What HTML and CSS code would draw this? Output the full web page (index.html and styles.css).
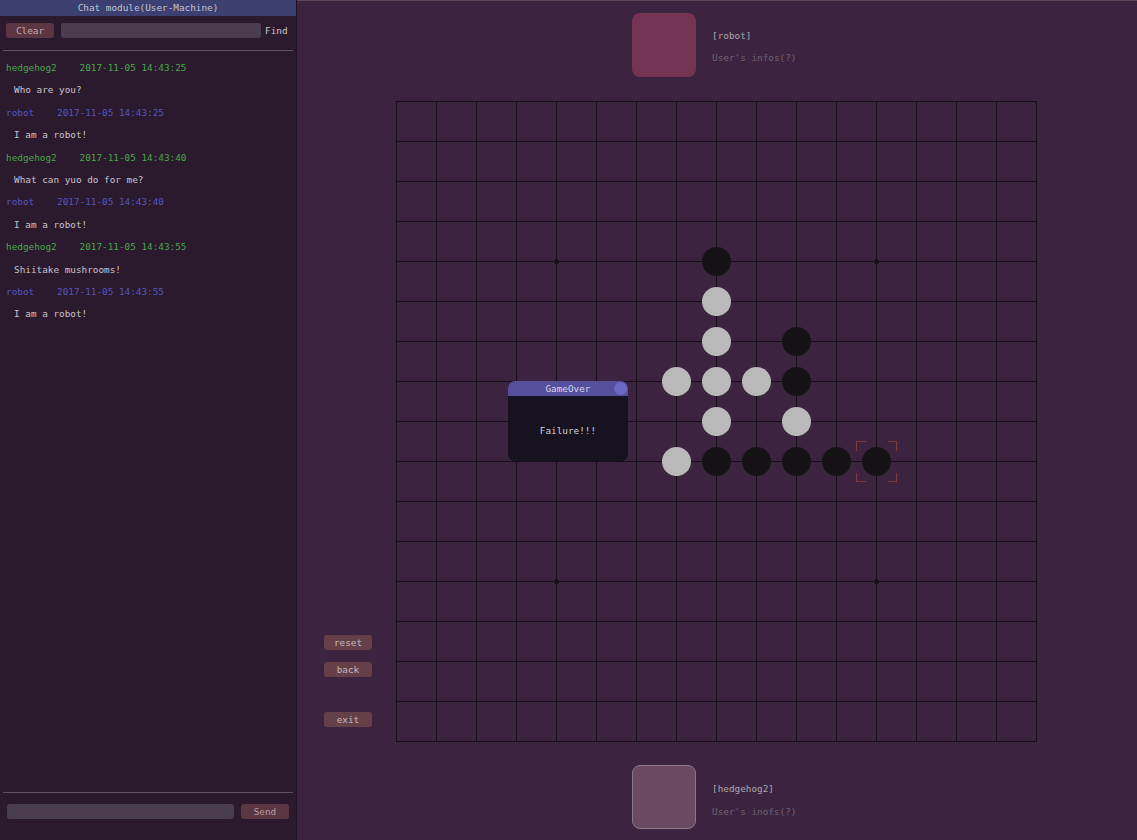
FILE: index.html
```html
<!DOCTYPE html>
<html>
<head>
<meta charset="utf-8">
<title>Gomoku</title>
<link rel="stylesheet" href="styles.css">
</head>
<body>
<div class="app">
  <aside class="chat">
    <div class="chat-title">Chat module(User-Machine)</div>
    <div class="chat-tools">
      <button class="btn btn-clear">Clear</button>
      <div class="field field-find"></div>
      <span class="find-label">Find</span>
    </div>
    <div class="sep"></div>
    <div class="messages">
      <div class="line head user"><span class="name">hedgehog2</span><span class="time">2017-11-05 14:43:25</span></div>
      <div class="line text">Who are you?</div>
      <div class="line head bot"><span class="name">robot</span><span class="time">2017-11-05 14:43:25</span></div>
      <div class="line text">I am a robot!</div>
      <div class="line head user"><span class="name">hedgehog2</span><span class="time">2017-11-05 14:43:40</span></div>
      <div class="line text">What can yuo do for me?</div>
      <div class="line head bot"><span class="name">robot</span><span class="time">2017-11-05 14:43:40</span></div>
      <div class="line text">I am a robot!</div>
      <div class="line head user"><span class="name">hedgehog2</span><span class="time">2017-11-05 14:43:55</span></div>
      <div class="line text">Shiitake mushrooms!</div>
      <div class="line head bot"><span class="name">robot</span><span class="time">2017-11-05 14:43:55</span></div>
      <div class="line text">I am a robot!</div>
    </div>
    <div class="sep"></div>
    <div class="chat-send">
      <div class="field field-msg"></div>
      <button class="btn btn-send">Send</button>
    </div>
  </aside>

  <main class="game">
    <div class="player player-top">
      <div class="avatar avatar-robot"></div>
      <div class="pinfo">
        <div class="pname">[robot]</div>
        <div class="pdesc">User's infos(?)</div>
      </div>
    </div>

    <div class="board-row">
      <div class="controls">
        <button class="btn btn-ctl">reset</button>
        <button class="btn btn-ctl">back</button>
        <button class="btn btn-ctl btn-exit">exit</button>
      </div>
      <div class="board">
        <svg class="grid" width="642" height="642" viewBox="0 0 642 642" xmlns="http://www.w3.org/2000/svg">
          <g id="lines" stroke="#140e16" stroke-width="1" shape-rendering="crispEdges"></g>
          <g fill="#140e16">
            <circle cx="160.5" cy="160.5" r="2.5"/>
            <circle cx="480.5" cy="160.5" r="2.5"/>
            <circle cx="160.5" cy="480.5" r="2.5"/>
            <circle cx="480.5" cy="480.5" r="2.5"/>
          </g>
          <g id="stones"></g>
          <g stroke="#7c3a3c" stroke-width="1" fill="none" shape-rendering="crispEdges">
            <path d="M460.5 349.5 V340.5 H469.5 M491.5 340.5 H500.5 V349.5 M500.5 371.5 V380.5 H491.5 M469.5 380.5 H460.5 V371.5"/>
          </g>
        </svg>
        <div class="dialog">
          <div class="dialog-title">GameOver<span class="dialog-dot"></span></div>
          <div class="dialog-body">Failure!!!</div>
        </div>
      </div>
    </div>

    <div class="player player-bottom">
      <div class="avatar avatar-user"></div>
      <div class="pinfo">
        <div class="pname">[hedgehog2]</div>
        <div class="pdesc">User's inofs(?)</div>
      </div>
    </div>
  </main>
</div>
<script src="board.js"></script>
</body>
</html>
```

FILE: board.js
```javascript
(function () {
  var ns = "http://www.w3.org/2000/svg";
  var lines = document.getElementById("lines");
  for (var i = 0; i <= 16; i++) {
    var p = 40 * i + 0.5;
    var h = document.createElementNS(ns, "line");
    h.setAttribute("x1", 0); h.setAttribute("x2", 641);
    h.setAttribute("y1", p); h.setAttribute("y2", p);
    lines.appendChild(h);
    var v = document.createElementNS(ns, "line");
    v.setAttribute("y1", 0); v.setAttribute("y2", 641);
    v.setAttribute("x1", p); v.setAttribute("x2", p);
    lines.appendChild(v);
  }
  var stones = [
    ["b", 8, 4], ["w", 8, 5], ["w", 8, 6], ["b", 10, 6],
    ["w", 7, 7], ["w", 8, 7], ["w", 9, 7], ["b", 10, 7],
    ["w", 8, 8], ["w", 10, 8],
    ["w", 7, 9], ["b", 8, 9], ["b", 9, 9], ["b", 10, 9], ["b", 11, 9], ["b", 12, 9]
  ];
  var g = document.getElementById("stones");
  stones.forEach(function (s) {
    var c = document.createElementNS(ns, "circle");
    c.setAttribute("cx", 40 * s[1] + 0.5);
    c.setAttribute("cy", 40 * s[2] + 0.5);
    c.setAttribute("r", 14.5);
    c.setAttribute("fill", s[0] === "b" ? "#141214" : "#b9b9b9");
    g.appendChild(c);
  });
})();
```

FILE: styles.css
```css
* { box-sizing: border-box; }
html, body {
  margin: 0;
  padding: 0;
  width: 1137px;
  height: 840px;
  overflow: hidden;
  background: #3c2440;
  font-family: "DejaVu Sans Mono", "Liberation Mono", monospace;
  font-size: 9.35px;
}
.app {
  display: flex;
  width: 1137px;
  height: 840px;
}

/* ---------- chat panel ---------- */
.chat {
  width: 297px;
  flex: none;
  height: 840px;
  background: #2b1a2e;
  border-right: 1px solid #1e1321;
  display: flex;
  flex-direction: column;
}
.chat-title {
  height: 16px;
  line-height: 16px;
  background: #3b4070;
  color: #c4c4d4;
  text-align: center;
}
.chat-tools {
  display: flex;
  align-items: center;
  height: 15px;
  margin-top: 7px;
  padding-left: 6px;
}
.btn {
  border: none;
  margin: 0;
  padding: 0;
  font: inherit;
  border-radius: 3px;
  cursor: pointer;
}
.btn-clear {
  width: 48px;
  height: 15px;
  background: #5c3642;
  color: #c4aab0;
}
.field {
  height: 15px;
  background: #4a3d50;
  border-radius: 3px;
}
.field-find {
  width: 200px;
  margin-left: 7px;
}
.find-label {
  margin-left: 4px;
  color: #cfc6cf;
}
.sep {
  height: 1px;
  background: #5e545f;
  margin: 0 3px;
}
.chat-tools + .sep { margin-top: 12px; }
.messages {
  flex: 1;
  padding-top: 6px;
  padding-left: 6px;
}
.line {
  height: 22.4px;
  line-height: 22.4px;
  white-space: pre;
}
.line .name { display: inline-block; }
.user .name { width: 73.5px; }
.bot .name { width: 51px; }
.user { color: #48a848; }
.bot { color: #5656c2; }
.text {
  color: #cbc3cb;
  padding-left: 8px;
}
.chat-send {
  display: flex;
  align-items: center;
  height: 15px;
  margin-top: 11px;
  margin-bottom: 21px;
  padding-left: 7px;
}
.field-msg { width: 227px; }
.btn-send {
  width: 48px;
  height: 15px;
  margin-left: 7px;
  background: #5c3642;
  color: #b89ea4;
}

/* ---------- game area ---------- */
.game {
  flex: 1;
  height: 840px;
  background: #3c2440;
  border-top: 1px solid #5a4a5c;
  display: flex;
  flex-direction: column;
}
.player {
  display: flex;
  padding-left: 335px;
}
.player-top { padding-top: 12px; }
.player-bottom { margin-top: 22px; }
.avatar {
  width: 64px;
  height: 64px;
  border-radius: 8px;
  flex: none;
}
.avatar-robot { background: #733553; }
.avatar-user {
  background: #6a4a62;
  border: 1px solid #8a7a88;
}
.pinfo {
  margin-left: 16px;
  padding-top: 12px;
}
.player-bottom .pinfo { padding-top: 13px; }
.pname, .pdesc {
  height: 22px;
  line-height: 22px;
  white-space: pre;
}
.player-bottom .pdesc { margin-top: 1px; }
.pname { color: #aea6ae; }
.pdesc { color: #716272; }

.board-row {
  display: flex;
  margin-top: 24px;
  padding-left: 27px;
}
.controls {
  width: 48px;
  display: flex;
  flex-direction: column;
  justify-content: flex-end;
  padding-bottom: 16px;
  margin-right: 24px;
}
.btn-ctl {
  width: 48px;
  height: 15px;
  background: #664049;
  color: #c8b6bd;
}
.btn-ctl + .btn-ctl { margin-top: 12px; }
.btn-ctl.btn-exit { margin-top: 35px; }

.board {
  position: relative;
  width: 642px;
  height: 642px;
}
.grid { display: block; }

.dialog {
  position: absolute;
  left: 112px;
  top: 280px;
  width: 120px;
  height: 80px;
  border-radius: 7px;
  overflow: hidden;
  background: #16121f;
  display: flex;
  flex-direction: column;
}
.dialog-title {
  position: relative;
  height: 15px;
  line-height: 15px;
  background: #56509c;
  color: #d6d4ea;
  text-align: center;
}
.dialog-dot {
  position: absolute;
  right: 1px;
  top: 1px;
  width: 13px;
  height: 13px;
  border-radius: 50%;
  background: #6c68c4;
}
.dialog-body {
  flex: 1;
  display: flex;
  align-items: center;
  justify-content: center;
  color: #d4d2da;
  padding-top: 3px;
}
```
